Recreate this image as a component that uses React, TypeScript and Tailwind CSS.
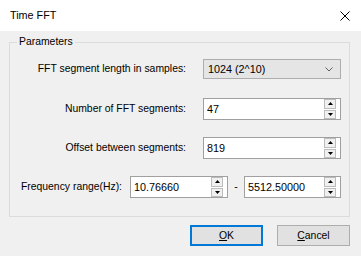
import React from "react"

const font = { fontFamily: '"Liberation Sans", Arial, sans-serif' }

function Arrow({ up }: { up?: boolean }) {
  return (
    <svg width="5" height="3" viewBox="0 0 5 3" className="block">
      {up ? <path d="M2.5 0 L5 3 L0 3 Z" fill="#000" /> : <path d="M0 0 L5 0 L2.5 3 Z" fill="#000" />}
    </svg>
  )
}

function SpinEdit({ value, width }: { value: string; width: string }) {
  return (
    <div className={`flex h-[22px] ${width} items-center border border-[#a0a0a0] bg-white`}>
      <span className="flex-1 pl-[3px] text-[10.8px] text-black">{value}</span>
      <div className="mr-[4px] flex h-[20px] w-[12px] flex-col gap-[1px]">
        <div className="flex flex-1 items-center justify-center border border-[#bcbcbc] bg-[#f0f0f0]">
          <Arrow up />
        </div>
        <div className="flex flex-1 items-center justify-center border border-[#bcbcbc] bg-[#f0f0f0]">
          <Arrow />
        </div>
      </div>
    </div>
  )
}

export default function App() {
  return (
    <div className="flex h-[256px] w-[361px] flex-col bg-[#f0f0f0] text-[10.4px] text-black" style={font}>
      {/* Title bar */}
      <div className="flex h-[31px] items-center justify-between bg-white pl-[10px] pr-[11px]">
        <span className="text-[10.8px]">Time FFT</span>
        <svg width="10" height="10" viewBox="0 0 10 10">
          <path d="M0.5 0.5 L9.5 9.5 M9.5 0.5 L0.5 9.5" stroke="#000" strokeWidth="1" />
        </svg>
      </div>

      {/* Group box */}
      <div className="relative ml-[9px] mr-[11px] mt-[11px] border border-[#dcdcdc] pb-[18px] pr-[8px] pt-[16px]">
        <span className="absolute left-[7px] top-[-7px] bg-[#f0f0f0] px-[2px] leading-[12px]">Parameters</span>

        <div className="flex items-center justify-end gap-[17px]">
          <span>FFT segment length in samples:</span>
          <div className="flex h-[20px] w-[138px] items-center justify-between border border-[#adadad] bg-[#e5e5e5] pl-[4px] pr-[7px]">
            <span className="text-[10.8px]">1024 (2^10)</span>
            <svg width="8" height="5" viewBox="0 0 8 5">
              <path d="M0.5 0.5 L4 4 L7.5 0.5" stroke="#606060" strokeWidth="1" fill="none" />
            </svg>
          </div>
        </div>

        <div className="mt-[19px] flex items-center justify-end gap-[17px]">
          <span>Number of FFT segments:</span>
          <SpinEdit value="47" width="w-[138px]" />
        </div>

        <div className="mt-[17px] flex items-center justify-end gap-[17px]">
          <span>Offset between segments:</span>
          <SpinEdit value="819" width="w-[138px]" />
        </div>

        <div className="mt-[17px] flex items-center justify-end">
          <span className="mr-[8px]">Frequency range(Hz):</span>
          <SpinEdit value="10.76660" width="w-[98px]" />
          <span className="w-[16px] text-center">-</span>
          <SpinEdit value="5512.50000" width="w-[97px]" />
        </div>
      </div>

      {/* Buttons */}
      <div className="mr-[11px] mt-[8px] flex justify-end gap-[14px]">
        <button className="flex h-[21px] w-[73px] items-center justify-center border-2 border-[#0078d7] bg-[#e1e1e1]">
          <span>
            <span className="underline">O</span>K
          </span>
        </button>
        <button className="flex h-[21px] w-[73px] items-center justify-center border border-[#adadad] bg-[#e1e1e1]">
          <span>
            <span className="underline">C</span>ancel
          </span>
        </button>
      </div>
    </div>
  )
}
